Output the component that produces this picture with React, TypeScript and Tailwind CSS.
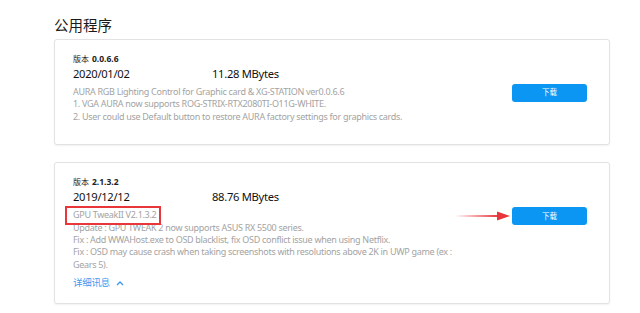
import React from "react";

const font = { fontFamily: '"Noto Sans", "Noto Sans CJK SC", sans-serif' };

function Card({
  version,
  date,
  size,
  lines,
  highlight,
  more,
}: {
  version: string;
  date: string;
  size: string;
  lines: string[];
  highlight?: string;
  more?: boolean;
}) {
  return (
    <div className="border border-[#e2e2e2] rounded-[3px] bg-white shadow-[0_1px_2px_rgba(0,0,0,0.06)] pl-[18px] pr-[22px] pt-[13px]">
      <div className="text-[8px] leading-[12px] text-[#222] flex items-center gap-[3px]">
        <span>版本</span>
        <span className="font-bold text-[8.5px]">{version}</span>
      </div>
      <div className="flex text-[11.2px] leading-[16px] text-[#111] tracking-[-0.3px] mt-[1px]">
        <span className="w-[139px]">{date}</span>
        <span>{size}</span>
      </div>
      <div className="flex items-start justify-between mt-[2px]">
        <div className="w-[386px] text-[9px] tracking-[-0.3px] leading-[12.4px] text-[#a3a3a3] mt-[2px]">
          {highlight && (
            <div>
              <span className="relative inline-block">
                {highlight}
                <span className="absolute left-[-8px] right-[-5px] top-[-3px] bottom-[-3px] border-2 border-[#e8363a]" />
              </span>
            </div>
          )}
          {lines.map((l, i) => (
            <div key={i}>{l}</div>
          ))}
          {more && (
            <div className="flex items-center gap-[6px] text-[#3a9bf0] text-[9.5px] mt-[6px] mb-[13px]">
              <span>详细讯息</span>
              <svg width="8" height="6" viewBox="0 0 8 6">
                <path d="M1 5 L4 2 L7 5" stroke="#3a9bf0" strokeWidth="1.4" fill="none" />
              </svg>
            </div>
          )}
          {!more && <div className="h-[21px]" />}
        </div>
        <div className="relative">
          {highlight && (
            <svg
              className="absolute left-[-57px] top-[3px]"
              width="56"
              height="12"
              viewBox="0 0 56 12"
            >
              <path d="M0 6 L44 5 L44 7 Z" fill="#e8363a" />
              <path d="M42 1.5 L55 6 L42 10.5 Z" fill="#e8363a" />
            </svg>
          )}
          <button className="w-[75px] h-[18px] rounded-[3px] bg-[#0a96f2] text-white text-[7.5px] flex items-center justify-center">
            下载
          </button>
        </div>
      </div>
    </div>
  );
}

export default function App() {
  return (
    <div className="w-[640px] h-[313px] bg-white overflow-hidden" style={font}>
      <div className="pl-[54px] pr-[30px] pt-[14px]">
        <h1 className="text-[14.5px] leading-[22px] text-[#1a1a1a] mb-[3px]">公用程序</h1>
        <div className="flex flex-col gap-[17px]">
          <Card
            version="0.0.6.6"
            date="2020/01/02"
            size="11.28 MBytes"
            lines={[
              "AURA RGB Lighting Control for Graphic card & XG-STATION ver0.0.6.6",
              "1. VGA AURA now supports ROG-STRIX-RTX2080TI-O11G-WHITE.",
              "2. User could use Default button to restore AURA factory settings for graphics cards.",
            ]}
          />
          <Card
            version="2.1.3.2"
            date="2019/12/12"
            size="88.76 MBytes"
            highlight="GPU TweakII V2.1.3.2"
            more
            lines={[
              "Update : GPU TWEAK 2 now supports ASUS RX 5500 series.",
              "Fix : Add WWAHost.exe to OSD blacklist, fix OSD conflict issue when using Netflix.",
              "Fix : OSD may cause crash when taking screenshots with resolutions above 2K in UWP game (ex : Gears 5).",
            ]}
          />
        </div>
      </div>
    </div>
  );
}
